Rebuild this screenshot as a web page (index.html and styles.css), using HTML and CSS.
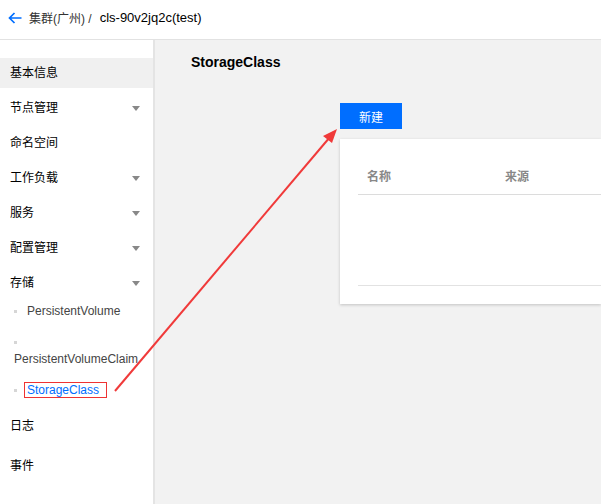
FILE: index.html
```html
<!DOCTYPE html>
<html>
<head>
<meta charset="utf-8">
<link rel="stylesheet" href="styles.css">
</head>
<body>
<div class="topbar">
  <svg class="back" width="14" height="12" viewBox="0 0 14 12"><path d="M13.5 6H1.5M6.5 1L1.5 6l5 5" fill="none" stroke="#006eff" stroke-width="1.7"/></svg>
  <span class="crumb">集群(广州) /</span>
  <span class="cluster">cls-90v2jq2c(test)</span>
</div>
<div class="layout">
  <nav class="sidebar">
    <div class="item active">基本信息</div>
    <div class="item">节点管理<span class="caret"></span></div>
    <div class="item">命名空间</div>
    <div class="item">工作负载<span class="caret"></span></div>
    <div class="item">服务<span class="caret"></span></div>
    <div class="item">配置管理<span class="caret"></span></div>
    <div class="item">存储<span class="caret"></span></div>
    <ul class="sub">
      <li><span class="dot"></span>PersistentVolume</li>
      <li><span class="dot"></span>PersistentVolumeClaim</li>
      <li><span class="dot"></span><span class="cur">StorageClass</span></li>
    </ul>
    <div class="item log">日志</div>
    <div class="item">事件</div>
  </nav>
  <main class="main">
    <h1 class="title">StorageClass</h1>
    <div class="content">
      <button class="btn">新建</button>
      <div class="card">
        <div class="thead">
          <span class="col1">名称</span>
          <span class="col2">来源</span>
        </div>
        <div class="tbody"></div>
      </div>
    </div>
  </main>
</div>
<svg class="annot" width="601" height="504" viewBox="0 0 601 504">
  <line x1="115" y1="391" x2="330" y2="137" stroke="#f03a3a" stroke-width="2"/>
  <polygon points="337,129 323,136 332,143" fill="#f03a3a"/>
</svg>
</body>
</html>
```
FILE: styles.css
```css
html, body {
  margin: 0;
  padding: 0;
}
body {
  width: 601px;
  height: 504px;
  overflow: hidden;
  font-family: "Liberation Sans", "Noto Sans CJK SC", sans-serif;
  color: #000;
  background: #fff;
  position: relative;
}
.topbar {
  border-bottom: 1px solid #e2e2e2;
  display: flex;
  align-items: center;
  padding-left: 8px;
  font-size: 13px;
  box-sizing: border-box;
  height: 40px;
}
.back {
  flex: none;
  margin-right: 7px;
  margin-top: -4px;
}
.crumb {
  color: #333;
  font-size: 12px;
  margin-right: 8px;
  margin-top: -5px;
}
.cluster {
  color: #000;
  margin-top: -5px;
}
.layout {
  display: flex;
  height: 464px;
}
.sidebar {
  width: 153px;
  border-right: 2px solid #e4e4e4;
  padding-top: 18px;
  font-size: 12px;
  background: #fff;
}
.item {
  height: 30px;
  line-height: 31px;
  padding-left: 10px;
  margin-bottom: 5px;
  position: relative;
  color: #000;
}
.item.active {
  background: #f0f0f0;
}
.caret {
  position: absolute;
  right: 13px;
  top: 13px;
  width: 0;
  height: 0;
  border-left: 4px solid transparent;
  border-right: 4px solid transparent;
  border-top: 5px solid #888;
}
.sub {
  list-style: none;
  margin: 0;
  padding: 0 0 0 14px;
  width: 130px;
  font-size: 12px;
  color: #444;
}
.sub li {
  line-height: 17px;
  margin-bottom: 14px;
}
.sub li:last-child {
  margin-bottom: 0;
}
.dot {
  display: inline-block;
  width: 3px;
  height: 3px;
  background: #d6d6d6;
  vertical-align: middle;
  margin-right: 10px;
}
.cur {
  color: #006eff;
  border: 1px solid #ee3333;
  padding: 0 7px 0 2px;
  margin-left: -3px;
}
.log {
  margin-top: 12px;
  margin-bottom: 10px;
}
.main {
  flex: 1;
  background: #f2f2f2;
  padding: 14px 0 0 36px;
}
.title {
  margin: 0;
  font-size: 14px;
  font-weight: bold;
  line-height: 17px;
  color: #000;
}
.content {
  margin-left: 149px;
  margin-top: 32px;
}
.btn {
  display: block;
  width: 62px;
  height: 26px;
  border: 0;
  background: #006eff;
  color: #fff;
  font-family: "Liberation Sans", "Noto Sans CJK SC", sans-serif;
  font-size: 12px;
  padding: 0;
}
.card {
  margin-top: 10px;
  background: #fff;
  height: 165px;
  box-shadow: 0 1px 3px rgba(0,0,0,0.2);
  padding: 18px 0 0 18px;
  box-sizing: border-box;
}
.thead {
  height: 37px;
  border-bottom: 1px solid #dcdcdc;
  display: flex;
  align-items: center;
  font-size: 12px;
  font-weight: bold;
  color: #888;
}
.col1 {
  margin-left: 9px;
  width: 138px;
}
.tbody {
  height: 90px;
  border-bottom: 1px solid #e2e2e2;
}
.annot {
  position: absolute;
  left: 0;
  top: 0;
  pointer-events: none;
}
```
